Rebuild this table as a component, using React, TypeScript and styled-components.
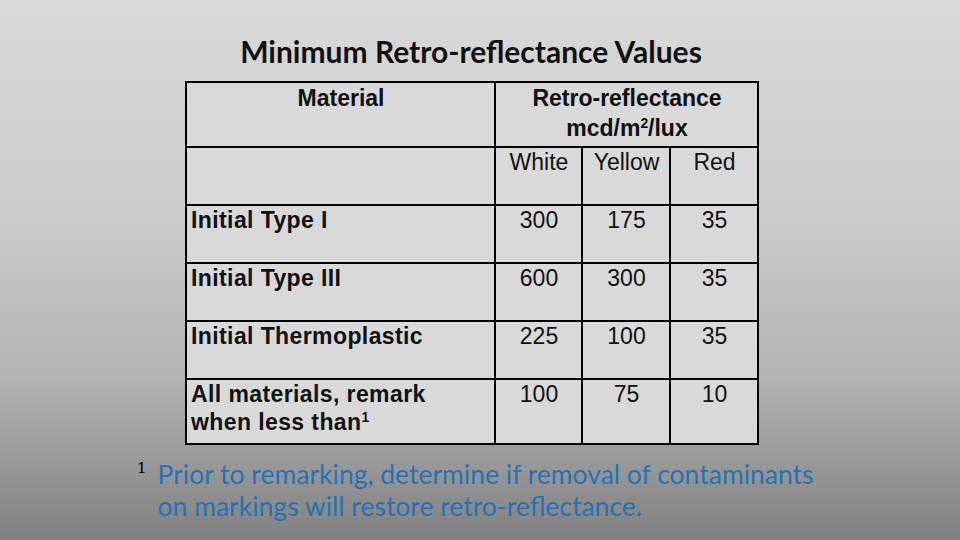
import React from "react";
import styled, { createGlobalStyle } from "styled-components";

const GlobalStyle = createGlobalStyle`
  html, body {
    margin: 0;
    padding: 0;
  }
  body {
    width: 960px;
    height: 540px;
    overflow: hidden;
  }
`;

const Slide = styled.main`
  width: 960px;
  height: 540px;
  box-sizing: border-box;
  padding-top: 34px;
  background: linear-gradient(
    to bottom,
    #d9d9d9 0%,
    #cccccc 40%,
    #b3b3b3 70%,
    #808080 100%
  );
  display: flex;
  flex-direction: column;
`;

const Content = styled.section`
  width: 572px;
  margin-left: 185px;
  display: flex;
  flex-direction: column;
`;

const Title = styled.h1`
  margin: 0 0 13px;
  font-family: "Lato", "Liberation Sans", sans-serif;
  font-weight: 700;
  font-size: 30px;
  line-height: 34px;
  color: #111;
  text-align: center;
`;

const Table = styled.table`
  width: 572px;
  border-collapse: collapse;
  table-layout: fixed;
  background: #d9d9d9;
  font-family: "Liberation Sans", Arial, sans-serif;
  font-size: 23px;
  color: #111;
`;

const Row = styled.tr<{ $h: number }>`
  height: ${(p) => p.$h}px;
`;

const Cell = styled.td<{ $bold?: boolean; $align?: "left" | "center" }>`
  border: 2px solid #000;
  padding: 0 3px 0 4px;
  vertical-align: top;
  text-align: ${(p) => p.$align ?? "center"};
  font-weight: ${(p) => (p.$bold ? 700 : 400)};
  letter-spacing: ${(p) => (p.$bold ? "0.4px" : "0")};
  line-height: 28px;
  white-space: nowrap;
`;

const HeadCell = styled(Cell)`
  letter-spacing: 0;
  line-height: 30px;
`;

const Sup = styled.sup`
  font-size: 0.6em;
  line-height: 0;
  vertical-align: 0.55em;
`;

const Footnote = styled.div`
  display: flex;
  align-items: flex-start;
  gap: 11px;
  margin: 13px 0 0 137px;
`;

const Marker = styled.span`
  font-family: "DejaVu Serif", "Liberation Serif", serif;
  font-size: 15px;
  line-height: 20px;
  color: #000;
`;

const NoteText = styled.p`
  margin: 0;
  font-family: "Lato", "Liberation Sans", sans-serif;
  font-size: 26.5px;
  line-height: 32px;
  color: #2473b8;
  white-space: nowrap;
`;

const rows = [
  { label: "Initial Type I", v: ["300", "175", "35"], h: 58 },
  { label: "Initial Type III", v: ["600", "300", "35"], h: 58 },
  { label: "Initial Thermoplastic", v: ["225", "100", "35"], h: 58 },
];

export default function App() {
  return (
    <>
      <GlobalStyle />
      <Slide>
        <Content>
          <Title>Minimum Retro-reflectance Values</Title>
          <Table>
            <colgroup>
              <col style={{ width: 309 }} />
              <col style={{ width: 87 }} />
              <col style={{ width: 88 }} />
              <col style={{ width: 88 }} />
            </colgroup>
            <thead>
              <Row $h={65}>
                <HeadCell $bold>Material</HeadCell>
                <HeadCell $bold colSpan={3}>
                  Retro-reflectance
                  <br />
                  mcd/m<Sup>2</Sup>/lux
                </HeadCell>
              </Row>
              <Row $h={58}>
                <Cell />
                <Cell>White</Cell>
                <Cell>Yellow</Cell>
                <Cell>Red</Cell>
              </Row>
            </thead>
            <tbody>
              {rows.map((r) => (
                <Row $h={r.h} key={r.label}>
                  <Cell $bold $align="left">
                    {r.label}
                  </Cell>
                  {r.v.map((x, i) => (
                    <Cell key={i}>{x}</Cell>
                  ))}
                </Row>
              ))}
              <Row $h={65}>
                <Cell $bold $align="left">
                  All materials, remark
                  <br />
                  when less than<Sup>1</Sup>
                </Cell>
                <Cell>100</Cell>
                <Cell>75</Cell>
                <Cell>10</Cell>
              </Row>
            </tbody>
          </Table>
        </Content>
        <Footnote>
          <Marker>1</Marker>
          <NoteText>
            Prior to remarking, determine if removal of contaminants
            <br />
            on markings will restore retro-reflectance.
          </NoteText>
        </Footnote>
      </Slide>
    </>
  );
}
